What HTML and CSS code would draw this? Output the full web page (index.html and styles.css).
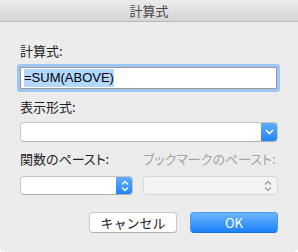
FILE: index.html
```html
<!DOCTYPE html>
<html lang="ja">
<head>
    <meta charset="UTF-8">
    <title>計算式</title>
    <link rel="stylesheet" href="styles.css">
</head>
<body>
<div class="dialog">
    <div class="dialog__title">計算式</div>

    <div class="dialog__body">
        <div class="label">計算式:</div>
        <div class="field"><span class="selected">=SUM(ABOVE)</span></div>

        <div class="label label--gap">表示形式:</div>
        <div class="popup popup--wide">
            <span class="popup__value"></span>
            <span class="popup__arrow">
                <svg width="9" height="6" viewBox="0 0 9 6"><path d="M1 1 L4.5 4.5 L8 1" fill="none" stroke="#fff" stroke-width="1.6"/></svg>
            </span>
        </div>

        <div class="row row--labels">
            <div class="label col">関数のペースト:</div>
            <div class="label label--off col">ブックマークのペースト:</div>
        </div>
        <div class="row">
            <div class="popup popup--small">
                <span class="popup__value"></span>
                <span class="popup__arrow popup__arrow--updown">
                    <svg width="8" height="12" viewBox="0 0 8 12"><path d="M1 4.5 L4 1.5 L7 4.5 M1 7.5 L4 10.5 L7 7.5" fill="none" stroke="#fff" stroke-width="1.4"/></svg>
                </span>
            </div>
            <div class="popup popup--off">
                <span class="popup__value"></span>
                <span class="popup__updown">
                    <svg width="8" height="12" viewBox="0 0 8 12"><path d="M1 4.5 L4 1.5 L7 4.5 M1 7.5 L4 10.5 L7 7.5" fill="none" stroke="#9a9a9a" stroke-width="1.2"/></svg>
                </span>
            </div>
        </div>

        <div class="buttons">
            <button class="button">キャンセル</button>
            <button class="button button--default">OK</button>
        </div>
    </div>
</div>
</body>
</html>
```

FILE: styles.css
```css
body {
  margin: 0;
  background: #ffffff;
  font-family: "Noto Sans CJK JP", "Liberation Sans", sans-serif;
  font-size: 13px;
  color: #222222;
}

.dialog {
  width: 298px;
  height: 252px;
  background: #ececec;
  border-radius: 0 0 5px 5px;
  overflow: hidden;
}

.dialog__title {
  height: 21px;
  line-height: 22px;
  text-align: center;
  color: #4a4a4a;
  background: linear-gradient(#ebebeb, #d5d5d5);
  border-bottom: 1px solid #b8b8b8;
}

.dialog__body {
  padding: 21px 20px 0 20px;
}

.label {
  line-height: 16px;
  height: 16px;
  font-feature-settings: "palt";
}

.label--gap {
  margin-top: 10px;
}

.label--off {
  color: #a3a3a3;
}

.field {
  margin-top: 8px;
  height: 20px;
  background: #ffffff;
  border: 1px solid #9a9a9a;
  box-shadow: 0 0 0 3px #9ec6f2;
  border-radius: 1px;
  font-family: "Liberation Sans", sans-serif;
  font-size: 13px;
  line-height: 20px;
  padding-left: 3px;
  margin-right: 1px;
}

.selected {
  background: #b3d7ff;
  color: #000000;
  display: inline-block;
  height: 18px;
  line-height: 18px;
  margin-top: 1px;
  vertical-align: top;
}

.popup {
  display: flex;
  height: 20px;
  box-sizing: border-box;
  margin-top: 7px;
  background: #ffffff;
  border: 1px solid #c6c6c6;
  border-bottom-color: #b0b0b0;
  border-radius: 4px;
  overflow: hidden;
}

.popup__value {
  flex: 1;
}

.popup__arrow {
  width: 17px;
  display: flex;
  align-items: center;
  justify-content: center;
  background: linear-gradient(#65aefc, #1d82fb);
  margin: -1px -1px -1px 0;
}

.row {
  display: flex;
  gap: 10px;
}

.row--labels {
  margin-top: 9px;
}

.col {
  flex: 0 0 auto;
}

.col:first-child {
  width: 113px;
}

.popup--small {
  width: 113px;
  height: 19px;
  margin-top: 9px;
}

.popup--off {
  flex: 1;
  height: 19px;
  margin-top: 9px;
  background: #f3f3f3;
  border-color: #d7d7d7;
}

.popup__updown {
  width: 18px;
  display: flex;
  align-items: center;
  justify-content: center;
}

.buttons {
  display: flex;
  justify-content: flex-end;
  gap: 13px;
  margin-top: 17px;
}

.button {
  width: 88px;
  height: 21px;
  padding: 0;
  font-family: "Noto Sans CJK JP", "Liberation Sans", sans-serif;
  font-size: 13px;
  color: #222222;
  background: #ffffff;
  border: 1px solid #c8c8c8;
  border-bottom-color: #b2b2b2;
  border-radius: 4px;
}

.button--default {
  color: #ffffff;
  background: linear-gradient(#6db4fc, #1b82fb);
  border-color: #4a9af5;
  border-bottom-color: #1a6fe0;
}
```
